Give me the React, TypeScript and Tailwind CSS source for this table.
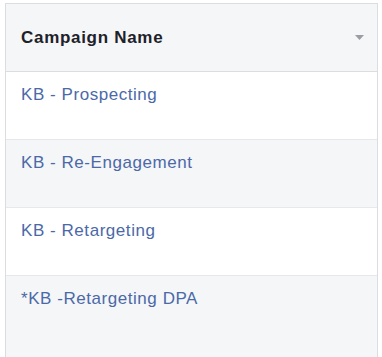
import React from "react";

const campaigns = [
  "KB - Prospecting",
  "KB - Re-Engagement",
  "KB - Retargeting",
  "*KB -Retargeting DPA",
];

export default function App() {
  return (
    <div className="w-[382px] h-[357px] bg-white pt-[3px] pl-[5px] overflow-hidden font-['Liberation_Sans',Arial,sans-serif]">
      <div className="w-[373px] border-x border-t border-[#dadde1]">
        {/* Header */}
        <div className="h-[68px] flex items-center justify-between bg-[#f5f6f7] border-b border-[#dadde1] pl-[15px] pr-[13px]">
          <span className="text-[17px] font-bold text-[#1d2129] tracking-[0.7px]">Campaign Name</span>
          <svg width="9" height="5" viewBox="0 0 9 5">
            <path d="M0 0h9L4.5 5z" fill="#9a9da3" />
          </svg>
        </div>

        {/* Rows */}
        {campaigns.map((name, i) => (
          <div
            key={name}
            className={`${i === campaigns.length - 1 ? "h-[90px]" : "h-[68px] border-b border-[#e6e8eb]"} ${
              i % 2 === 1 ? "bg-[#f5f6f7]" : "bg-white"
            } pl-[15px] pt-[10px]`}
          >
            <span className="text-[17px] text-[#4b69a8] tracking-[0.55px]">{name}</span>
          </div>
        ))}
      </div>
    </div>
  );
}
